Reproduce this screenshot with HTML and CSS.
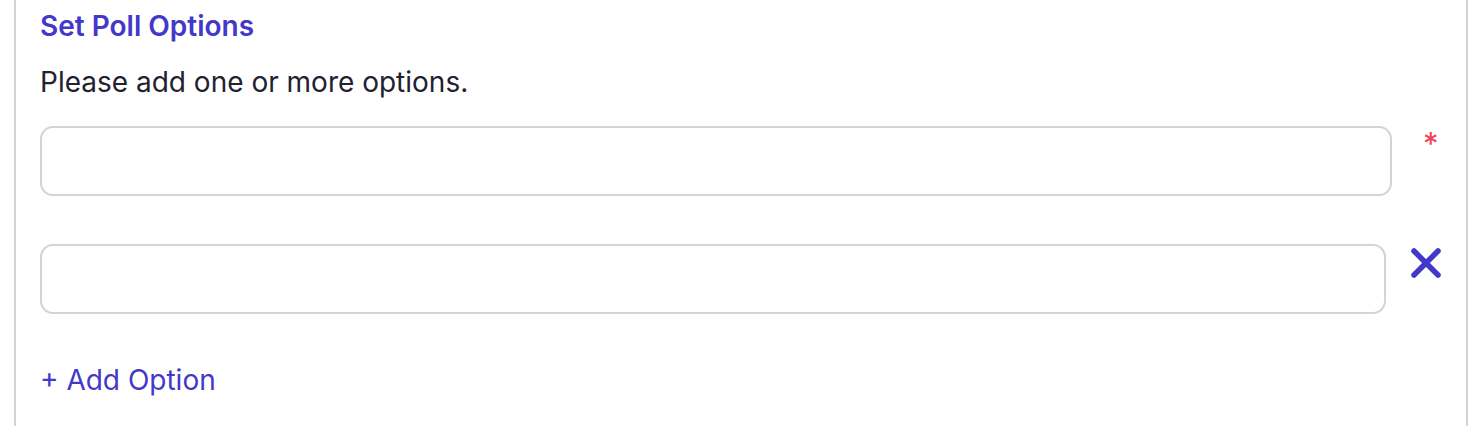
FILE: index.html
```html
<!DOCTYPE html>
<html lang="en">
<head>
<meta charset="utf-8">
<title>Set Poll Options</title>
<link rel="stylesheet" href="styles.css">
</head>
<body>
<section class="panel">
  <h2 class="title">Set Poll Options</h2>
  <p class="hint">Please add one or more options.</p>
  <div class="options">
    <div class="option-row">
      <input class="option-input" type="text" aria-label="Option 1">
      <span class="required">*</span>
    </div>
    <div class="option-row">
      <input class="option-input" type="text" aria-label="Option 2">
      <button class="remove" type="button" aria-label="Remove option">
        <svg width="32" height="32" viewBox="0 0 32 32" aria-hidden="true">
          <line x1="4" y1="4" x2="28" y2="28" />
          <line x1="28" y1="4" x2="4" y2="28" />
        </svg>
      </button>
    </div>
  </div>
  <button class="add" type="button">+ Add Option</button>
</section>
</body>
</html>
```

FILE: styles.css
```css
html, body {
  margin: 0;
  padding: 0;
  background: #ffffff;
}

body {
  font-family: Inter, "Noto Sans", "Liberation Sans", sans-serif;
  color: #222130;
}

.panel {
  box-sizing: border-box;
  margin-left: 14px;
  width: 1454px;
  min-height: 440px;
  border-left: 2px solid #d4d4d8;
  border-right: 2px solid #d4d4d8;
  padding: 6px 24px 0 24px;
}

.title {
  margin: 0;
  font-size: 28px;
  line-height: 40px;
  font-weight: 600;
  color: #4338ca;
}

.hint {
  margin: 16px 0 0 0;
  font-size: 28px;
  line-height: 40px;
  font-weight: 400;
}

.options {
  display: flex;
  flex-direction: column;
  gap: 48px;
  margin-top: 24px;
}

.option-row {
  display: flex;
  align-items: flex-start;
  gap: 24px;
}

.option-input {
  flex: 1;
  box-sizing: border-box;
  height: 70px;
  border: 2px solid #d4d4d8;
  border-radius: 13px;
  background: #ffffff;
  font: inherit;
  font-size: 28px;
  padding: 0 20px;
  outline: none;
}

.required {
  width: 26px;
  padding-left: 7px;
  box-sizing: border-box;
  font-size: 31px;
  line-height: 36px;
  color: #f43f5e;
}

.remove {
  width: 32px;
  height: 32px;
  margin-top: 3px;
  padding: 0;
  border: 0;
  background: none;
  display: flex;
}

.remove svg line {
  stroke: #4338ca;
  stroke-width: 5.5;
  stroke-linecap: round;
}

.add {
  display: block;
  margin-top: 46px;
  padding: 0;
  border: 0;
  background: none;
  font: inherit;
  font-size: 28px;
  line-height: 40px;
  color: #4338ca;
}
```
